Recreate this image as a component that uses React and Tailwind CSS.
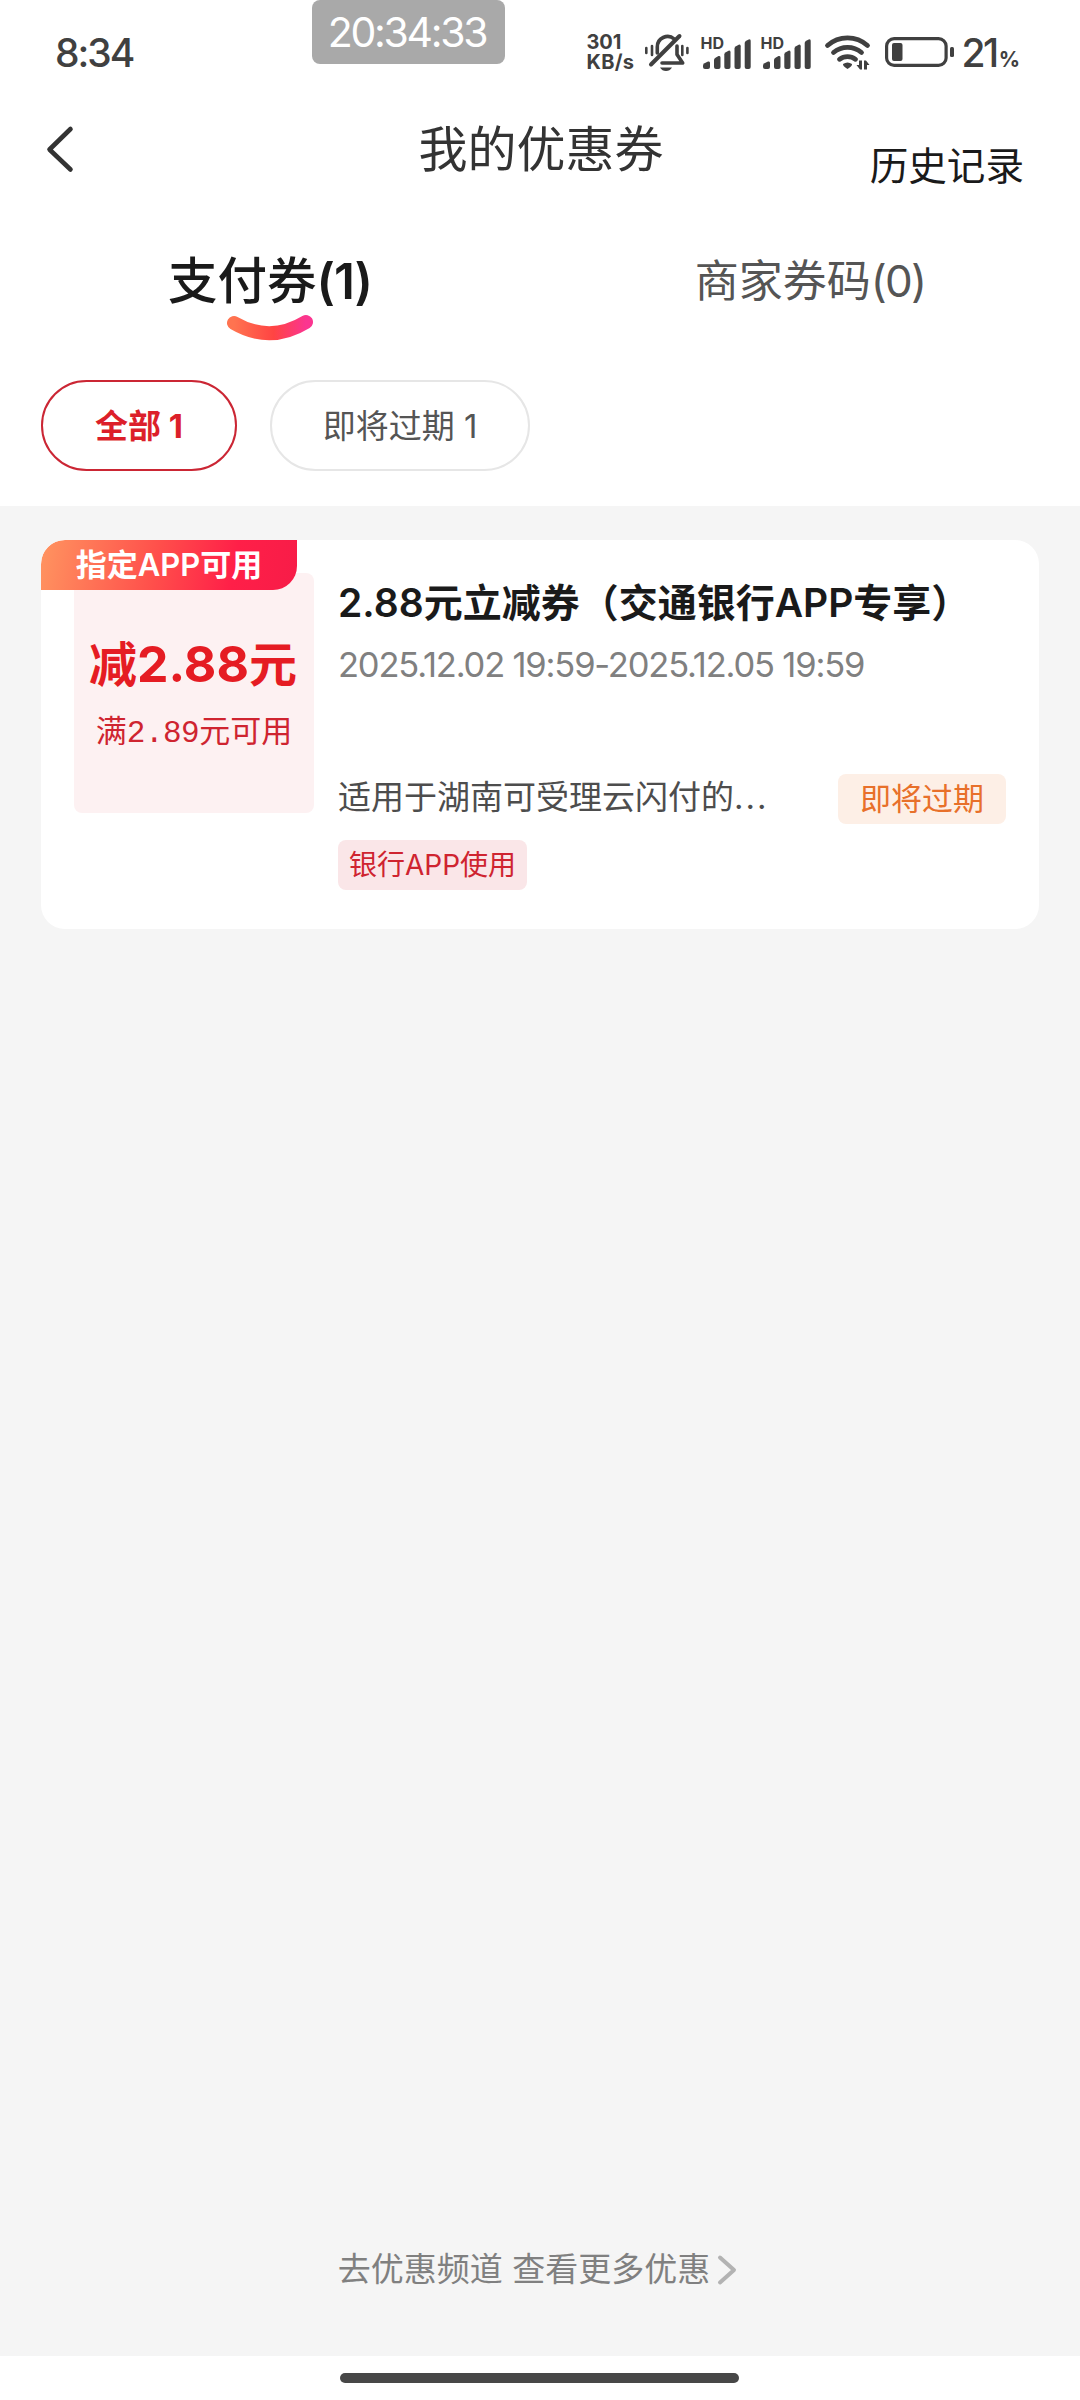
function SignalIcon() {
  return (
    <div className="relative w-[50px] h-[36px]">
      <span className="absolute left-[-2px] top-[1px] text-[16px] leading-none font-bold">
        HD
      </span>
      <svg className="block" width="50" height="36" viewBox="0 0 50 36" fill="#404040">
        <path d="M1 31.500q0-1.500 1.500-2.300l3.500-1.600q2-.8 2 1.400v4q0 2-2 2h-3q-2 0-2-2z" />
        <path d="M12 26q0-1.500 1.500-2.300l3-1.600q2-.8 2 1.400v9.500q0 2-2 2h-2.500q-2 0-2-2z" />
        <path d="M22.300 20.500q0-1.500 1.500-2.300l2.700-1.400q2-.8 2 1.400v14.800q0 2-2 2h-2.200q-2 0-2-2z" />
        <path d="M32.500 14.500q0-1.500 1.500-2.300l2.700-1.400q2-.8 2 1.400v20.800q0 2-2 2h-2.200q-2 0-2-2z" />
        <path d="M42.700 9q0-1.500 1.500-2.300l2.500-1.200q2-.8 2 1.400v26.100q0 2-2 2h-2q-2 0-2-2z" />
      </svg>
    </div>
  );
}

function MuteIcon() {
  return (
    <svg width="46" height="40" viewBox="0 0 46 40" fill="none" stroke="#404040" strokeWidth="3" strokeLinecap="round">
      <path d="M2.300 16v5M8 14v9M38.300 14v9M43.400 16v5" strokeWidth="2.600" />
      <path d="M13.300 21v-6a10.300 10.300 0 0 1 17-8" strokeWidth="3.600" />
      <path d="M33 14v8.500l5.700 8.500H18" strokeWidth="3.600" strokeLinejoin="round" />
      <path d="M35.500 4L7 32.500" strokeWidth="4" />
      <path d="M16 35.500h12q-2.200 3.500-6 3.500t-6-3.500z" fill="#404040" stroke="none" />
    </svg>
  );
}

function WifiIcon() {
  return (
    <svg width="48" height="38" viewBox="0 0 48 38" fill="none" stroke="#404040" strokeWidth="4.800" strokeLinecap="round">
      <path d="M3.500 12.500a30 30 0 0 1 40 0" />
      <path d="M9.500 19.500a21.500 21.500 0 0 1 28 0" />
      <path d="M15.500 26.300a13 13 0 0 1 16 0" />
      <path d="M23.500 36q-5-3-4.500-5q4.500-3 9 0q.5 2-4.500 5z" fill="#404040" stroke="none" />
      <path d="M38 27.500v9h-2l-3.500-4.500h2.500v-4.500zM40 36.500v-9h2l3.500 4.500h-2.500v4.500z" fill="#404040" stroke="none" />
    </svg>
  );
}

function BatteryIcon() {
  return (
    <svg width="70" height="30" viewBox="0 0 70 30" fill="none">
      <rect x="1.600" y="1.600" width="59.500" height="26.800" rx="7.500" stroke="#404040" strokeWidth="3.200" />
      <rect x="7" y="6" width="10.500" height="18" rx="2" fill="#404040" />
      <rect x="65" y="10" width="4" height="10" rx="1.500" fill="#404040" />
    </svg>
  );
}

function StatusBar() {
  return (
    <div className="relative h-[104px] flex items-center justify-between pl-[55px] pr-[60px] text-[#404040]">
      <div className="text-[39px] leading-none font-medium tracking-[-2px]">8:34</div>
      <div className="absolute left-[312px] top-0 w-[193px] h-[64px] pr-[3px] rounded-[8px] bg-[#a9a9a9] flex items-center justify-center text-white text-[41px] leading-none tracking-[-2.300px]">
        20:34:33
      </div>
      <div className="flex items-center">
        <div className="w-[57px] text-[20px] leading-[20px] font-bold">
          <div>301</div>
          <div className="tracking-[0.300px]">KB/s</div>
        </div>
        <div className="ml-[1px]">
          <MuteIcon />
        </div>
        <div className="flex gap-[10px] ml-[12px]">
          <SignalIcon />
          <SignalIcon />
        </div>
        <div className="ml-[12px]">
          <WifiIcon />
        </div>
        <div className="ml-[13px]">
          <BatteryIcon />
        </div>
        <div className="ml-[6px] flex items-baseline leading-none">
          <span className="text-[39px] font-medium tracking-[-2.500px]">21</span>
          <span className="text-[21px] ml-[2px] font-bold">%</span>
        </div>
      </div>
    </div>
  );
}

function NavBar() {
  return (
    <div className="h-[90px] grid grid-cols-[300px_1fr_300px] text-[#333333]">
      <div className="pl-[45px] pt-[21px]">
        <svg width="30" height="48" viewBox="0 0 30 48" fill="none" stroke="#333333" strokeWidth="4.600" strokeLinecap="round" strokeLinejoin="round">
          <path d="M25.500 4L4.500 24.500L25.500 44.500" />
        </svg>
      </div>
      <h1 className="pt-[21px] pl-[2px] text-center text-[49px] leading-none">我的优惠券</h1>
      <div className="pt-[43px] pr-[56px] text-right text-[38.600px] leading-none text-[#1a1a1a]">历史记录</div>
    </div>
  );
}

function Tabs() {
  return (
    <div className="h-[186px] grid grid-cols-2 text-center">
      <div className="pt-[63px] flex flex-col items-center text-[49.500px] leading-none font-medium text-[#1a1a1a]">
        <div className="whitespace-nowrap">
          支付券<span className="tracking-[-1px] font-semibold">(1)</span>
        </div>
        <svg className="mt-[7px]" width="88" height="28" viewBox="0 0 88 28" fill="none">
          <defs>
            <linearGradient id="smile" x1="0" y1="0" x2="1" y2="0">
              <stop offset="0" stopColor="#ff7350" />
              <stop offset="0.550" stopColor="#ff4443" />
              <stop offset="1" stopColor="#fb3590" />
            </linearGradient>
          </defs>
          <path d="M8 9Q44 30 80 8" stroke="url(#smile)" strokeWidth="14" strokeLinecap="round" />
        </svg>
      </div>
      <div className="pt-[65px] text-[44px] leading-none text-[#555555]">
        商家券码<span className="tracking-[-1.800px]">(0)</span>
      </div>
    </div>
  );
}

function Filters() {
  return (
    <div className="h-[126px] flex gap-[33px] pl-[41px] text-[33px] leading-none">
      <div className="w-[196px] h-[91px] pt-[2px] rounded-full border-[2.500px] border-[#cb2634] text-[#dc1f2a] font-bold flex items-center justify-center">
        <span>全部 1</span>
      </div>
      <div className="w-[260px] h-[91px] pt-[2px] rounded-full border-[2.500px] border-[#e6e6e6] text-[#555555] flex items-center justify-center">
        即将过期 1
      </div>
    </div>
  );
}

function CouponCard() {
  return (
    <div className="relative h-[389px] rounded-[24px] bg-white flex overflow-hidden">
      <div className="ml-[33px] mt-[33px] w-[240px] h-[240px] rounded-[8px] bg-[#fdf1f2] flex flex-col items-center">
        <div className="mt-[66px] h-[50px] pr-[2px] text-[48px] leading-none font-bold text-[#e51c23] whitespace-nowrap">
          减<span className="text-[50px] leading-none">2.88</span>元
        </div>
        <div className="mt-[26px] text-[31px] leading-none text-[#cf2430] whitespace-nowrap">
          满<span className="font-['Liberation_Mono',monospace] tracking-[-0.500px]">2.89</span>元可用
        </div>
      </div>
      <div className="ml-[24px] flex-1">
        <div className="mt-[43px] text-[39px] leading-none font-semibold text-[#1a1a1a] whitespace-nowrap">
          2.88元立减券（交通银行APP专享）
        </div>
        <div className="mt-[26px] text-[34.500px] leading-none tracking-[-1.180px] text-[#808080] whitespace-nowrap">
          2025.12.02 19:59-2025.12.05 19:59
        </div>
        <div className="mt-[91px] h-[50px] flex justify-between pr-[33px]">
          <div className="mt-[7px] text-[33px] leading-none text-[#4d4d4d]">
            适用于湖南可受理云闪付的<span className="tracking-[2px]">...</span>
          </div>
          <div className="w-[168px] h-[50px] rounded-[8px] bg-[#fdefe6] text-[#e8702a] text-[31px] leading-none flex items-center justify-center">
            即将过期
          </div>
        </div>
        <div className="mt-[16px] w-[189px] h-[50px] pt-[1px] rounded-[8px] bg-[#fae6e8] text-[#cf2430] text-[28px] leading-none flex items-center justify-center">
          银行APP使用
        </div>
      </div>
      <div className="absolute left-0 top-0 w-[256px] h-[50px] pb-[2px] rounded-tl-[24px] rounded-br-[24px] bg-[linear-gradient(100deg,#ff9460_0%,#ff4f4b_45%,#ff1f48_75%,#f71c48_100%)] text-white text-[31px] leading-none font-semibold flex items-center justify-center">
        指定APP可用
      </div>
    </div>
  );
}

export default function App() {
  return (
    <div className="w-[1080px] h-[2400px] flex flex-col bg-white font-['Inter','Noto_Sans_CJK_SC',sans-serif]">
      <StatusBar />
      <NavBar />
      <Tabs />
      <Filters />

      <main className="h-[1850px] bg-[#f5f5f5] px-[41px] pt-[34px] flex flex-col justify-between">
        <CouponCard />
        <div className="mb-[70px] pr-[5px] flex items-center justify-center text-[33px] leading-none text-[#808080]">
          <span>去优惠频道 查看更多优惠</span>
          <svg className="ml-[7px]" width="20" height="32" viewBox="0 0 20 32" fill="none" stroke="#b3b3b3" strokeWidth="4" strokeLinecap="round" strokeLinejoin="round">
            <path d="M3 3.500L17 16L3 28.500" />
          </svg>
        </div>
      </main>

      {/* Home indicator */}
      <div className="h-[44px] flex justify-center pt-[17px] pr-[2px]">
        <div className="w-[399px] h-[10px] rounded-full bg-[#474747]" />
      </div>
    </div>
  );
}
